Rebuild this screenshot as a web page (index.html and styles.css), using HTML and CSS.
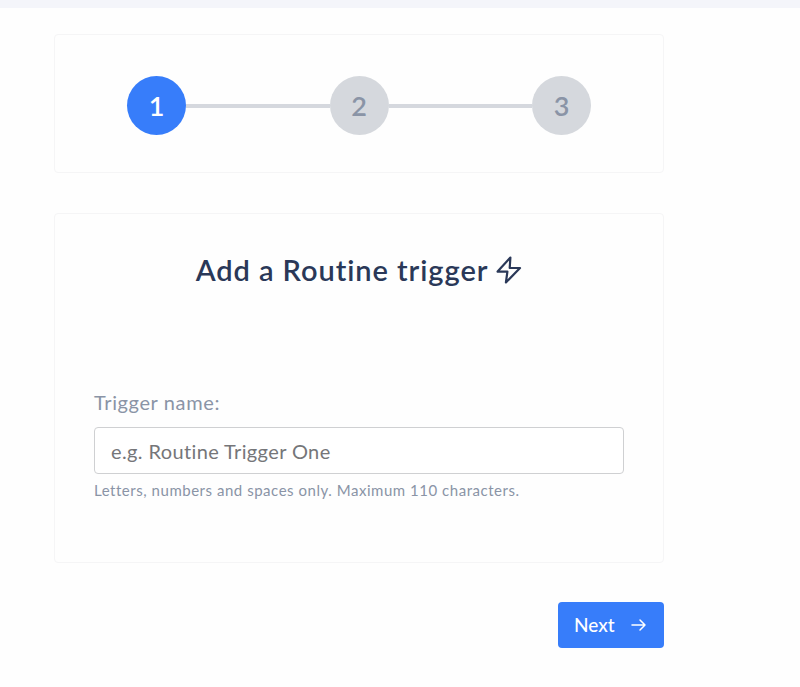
FILE: index.html
```html
<!DOCTYPE html>
<html lang="en">
<head>
<meta charset="utf-8">
<title>Add a Routine trigger</title>
<link rel="stylesheet" href="styles.css">
</head>
<body>
<main class="page">
  <ol class="card steps">
    <li class="step active">1</li>
    <li class="line"></li>
    <li class="step">2</li>
    <li class="line"></li>
    <li class="step">3</li>
  </ol>
  <section class="card form">
    <h1 class="title"><span class="title-text">Add a Routine trigger</span>
      <svg class="bolt" viewBox="0 0 26 28"><path d="M14.400 1.500 1.600 15.600h9.800l-1.500 10.900L24 12h-10.300z"/></svg>
    </h1>
    <label class="label" for="name"><span>Trigger name:</span></label>
    <input class="input" id="name" type="text" placeholder="e.g. Routine Trigger One">
    <p class="hint"><span>Letters, numbers and spaces only. Maximum 110 characters.</span></p>
  </section>
  <button class="next" type="button"><span class="next-text">Next</span>
    <svg class="arrow" viewBox="0 0 16 14"><path d="M1 7h13M9 2l5 5-5 5"/></svg>
  </button>
</main>
</body>
</html>
```
FILE: styles.css
```css
* { box-sizing: border-box; }
body {
  margin: 0;
  min-height: 687px;
  border-top: 8px solid #f4f5fa;
  background: #fefefe;
  font-family: Lato, "Open Sans", sans-serif;
}
.page {
  display: flex;
  flex-direction: column;
  width: 610px;
  margin: 26px 0 0 54px;
}
.card {
  margin: 0 0 39px;
  border: 1px solid #f5f5f6;
  border-radius: 4px;
}
.steps {
  display: flex;
  align-items: center;
  height: 139px;
  margin-bottom: 40px;
  padding: 4px 72px 0;
  list-style: none;
}
.step {
  display: flex;
  align-items: center;
  justify-content: center;
  width: 59px;
  height: 59px;
  border-radius: 50%;
  background: #d5d8dd;
  color: #8a94a6;
  font-size: 27px;
  font-weight: 600;
  line-height: 1;
}
.active { background: #377dfa; color: #fff; }
.line { flex: 1; height: 4px; background: #d5d8de; }
.form {
  display: flex;
  flex-direction: column;
  height: 350px;
  padding: 36px 39px 0;
}
.title {
  display: flex;
  align-items: center;
  justify-content: center;
  gap: 8px;
  height: 40px;
  margin: 0 0 98px;
  color: #2a3858;
  font-size: 29px;
  font-weight: 600;
  letter-spacing: 0.94px;
}
.title-text { padding-bottom: 2px; }
.bolt { width: 26px; height: 28px; fill: none; stroke: #2a3858; stroke-width: 2.2; stroke-linejoin: round; }
.label {
  height: 39px;
  color: #8a94a6;
  font-size: 20px;
  line-height: 28px;
  letter-spacing: 0.62px;
}
.input {
  width: 530px;
  height: 47px;
  padding: 0 16px;
  border: 1.500px solid #cfd0d2;
  border-radius: 4px;
  background: #fff;
  font: 20px Lato, "Open Sans", sans-serif;
  letter-spacing: 0.38px;
}
.input::placeholder { color: #757679; opacity: 1; }
.hint {
  margin: 6px 0 0;
  color: #8a94a6;
  font-size: 15px;
  line-height: 20px;
  letter-spacing: 0.53px;
}
.next {
  display: flex;
  align-items: center;
  align-self: flex-end;
  justify-content: space-between;
  width: 106px;
  height: 46px;
  padding: 0 17px 0 16px;
  border: 0;
  border-radius: 4px;
  background: #377dfa;
  color: #fff;
  font: 500 19px Lato, "Open Sans", sans-serif;
}
.next-text { padding-bottom: 2px; }
.arrow { width: 16px; height: 14px; fill: none; stroke: #fff; stroke-width: 1.500; stroke-linecap: round; stroke-linejoin: round; }
```
